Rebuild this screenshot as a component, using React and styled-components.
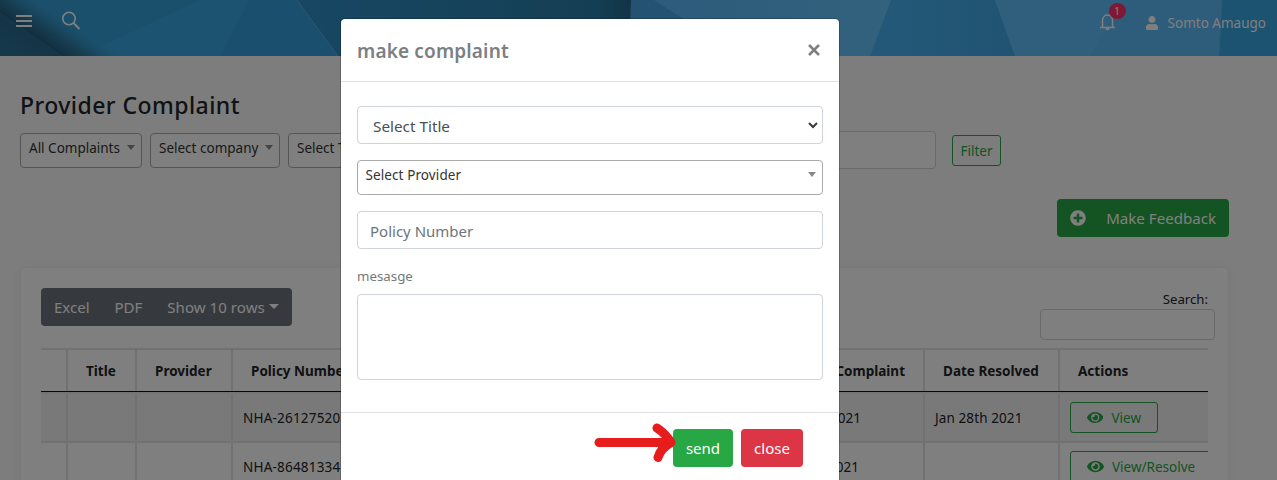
import React from "react";
import styled, { createGlobalStyle } from "styled-components";
import { FaEye, FaPlusCircle, FaUser } from "react-icons/fa";

const Global = createGlobalStyle`
  * { box-sizing: border-box; }
  body { margin: 0; height: 480px; overflow: hidden; background: #fafafa; font-family: "Noto Sans", "Open Sans", sans-serif; font-size: 13.5px; color: #212529; }
  button, input, select, textarea { font: inherit; color: inherit; margin: 0; }
`;

const T = styled.span`
  font-size: ${p => p.$size || 13.5}px;
  letter-spacing: ${p => p.$ls || 0}px;
  line-height: 1;
  white-space: nowrap;
`;

const Page = styled.div`height: 480px; overflow: hidden; position: relative;`;

const Header = styled.header`
  height: 56px; position: relative; display: flex; align-items: center; color: #fff; padding: 0 11px 0 16px; overflow: hidden;
`;
const Wallpaper = styled.svg`position: absolute; inset: 0; width: 1277px; height: 56px;`;
const Menu = styled.div`
  width: 16px; height: 12px; display: flex; flex-direction: column; justify-content: space-between; position: relative; margin-top: -14px;
  i { height: 2px; background: #fff; }
`;
const HeaderIcon = styled.svg`position: relative; fill: none; stroke: #fff;`;
const SearchIcon = styled(HeaderIcon)`width: 19px; height: 19px; margin: -15px 0 0 30px;`;
const HeaderRight = styled.div`margin-left: auto; display: flex; align-items: center; position: relative; margin-top: -9px;`;
const BellWrap = styled.div`position: relative; width: 16px; height: 18px; margin: -4px 30px 0 0;`;
const Badge = styled.span`
  position: absolute; left: 9px; top: -10px; width: 17px; height: 16px; border-radius: 50%; background: #ff3366;
  color: #fff; font-size: 10px; line-height: 16px; text-align: center;
`;
const User = styled.div`display: flex; align-items: center; gap: 9px;
  svg { margin: -2px 0 0 -1px; }
`;

const Content = styled.main`width: 1229px; padding: 35px 0 0 20px;`;
const Title = styled.h1`margin: 0; height: 28px; font-size: 23px; line-height: 28px; font-weight: 500; letter-spacing: 0.45px;`;
const Filters = styled.div`display: flex; align-items: flex-start; gap: 8px; margin-top: 12px; height: 38px;`;
const Select2 = styled.div`
  height: 35px; width: ${p => p.$w || "auto"}; margin: ${p => p.$m || "2px 0 0"}; border: 1px solid #aaa; border-radius: 4px; background: #fff;
  padding: 0 6px 4px ${p => p.$pl || 8}px; display: flex; align-items: center; justify-content: space-between; color: #333;
  flex: none;
`;
const Caret = styled.i`border: solid transparent; border-width: 5px 4px 0; border-top-color: #888; margin-top: -2px;`;
const DateField = styled.input`height: 38px; width: 300px; border: 1px solid #ced4da; border-radius: 4px; background: #fff; margin-left: 140px;`;
const FilterButton = styled.button`
  height: 31px; width: 49px; margin: 4px 0 0 8px; padding: 0; border: 1px solid #28a745; border-radius: 3px; background: transparent; color: #28a745;
`;
const FeedbackRow = styled.div`display: flex; justify-content: flex-end; margin-top: 30px;`;
const FeedbackButton = styled.button`
  width: 172px; height: 38px; border: 0; border-radius: 4px; background: #28a745; color: #fff; padding: 1px 13px 0 13px; display: flex; align-items: center; justify-content: space-between;
  svg { margin-top: -1px; }
`;
const Card = styled.section`
  margin-top: 30px; width: 1209px; height: 300px; padding: 20px; background: #fff; border: 1px solid #f3f3f3; border-radius: 4px; box-shadow: 0 0 10px rgba(0,0,0,.04);
`;
const CardTop = styled.div`display: flex; justify-content: space-between; height: 60px;`;
const ExportGroup = styled.div`
  width: 251px; height: 38px; background: #6c757d; color: #fff; border-radius: 4px; display: flex; align-items: center; padding: 0 13px; gap: 25px;
`;
const RowsMenu = styled.span`display: flex; align-items: center; gap: 4px;`;
const WhiteCaret = styled.i`border: solid transparent; border-width: 5px 5px 0; border-top-color: #fff; margin-top: -1px;`;
const SearchBox = styled.label`display: flex; flex-direction: column; align-items: flex-end; gap: 2px; margin-right: -7px; padding-top: 5px; width: 175px;
  ${T} { margin-right: 7px; height: 14px; }
`;
const SearchInput = styled.input`width: 175px; height: 31px; border: 1px solid #ced4da; border-radius: 4px; background: #fff;`;

const Table = styled.div`width: 1167px; overflow: hidden; border-top: 2px solid #dee2e6;`;
const Row = styled.div`
  display: grid; grid-template-columns: 27px 69px 96px 596px 96px 135px 210px;
  height: ${p => (p.$head ? 42 : p.$striped ? 51 : 49)}px;
  background: ${p => (p.$striped ? "#f2f2f2" : "#fff")};
  border-top: ${p => (p.$striped ? "2px solid #e6e8ea" : "0")};
  border-bottom: ${p => (p.$head ? "1px solid #111" : "0")};
  font-weight: ${p => (p.$head ? 700 : 400)};
`;
const Cell = styled.div`
  display: flex; align-items: center; padding-left: ${p => p.$pl ?? 10}px; padding-right: ${p => p.$pr || 0}px; justify-content: ${p => (p.$end ? "flex-end" : "flex-start")};
  border-right: 2px solid #dee2e6; border-bottom: ${p => (p.$body ? 2 : 0)}px solid #dee2e6; padding-top: ${p => (p.$button ? 0 : p.$body ? 2 : 3)}px; white-space: nowrap;
`;
const ViewButton = styled.button`
  width: ${p => p.$w}px; height: 31px; border: 1px solid #28a745; color: #28a745; background: transparent; border-radius: 3px;
  display: flex; align-items: center; gap: 8px; padding: 0 16px; flex: none;
  ${T} { padding-top: 2px; }
`;

const Backdrop = styled.div`position: absolute; inset: 0; background: rgba(0,0,0,.5);`;
const Modal = styled.div`
  position: absolute; left: 340px; top: 18px; width: 500px; height: 500px; background: #fff; border: 1px solid rgba(0,0,0,.2); background-clip: padding-box; border-radius: 5px;
`;
const ModalHead = styled.div`height: 63px; border-bottom: 1px solid #dee2e6; padding: 2px 19px 0 16px; display: flex; align-items: center; justify-content: space-between; color: #7b8084; font-weight: 600;`;
const CloseIcon = styled.svg`width: 12px; height: 12px; margin-top: -2px; stroke: #7f7f7f; stroke-width: 2.5; fill: none;`;
const ModalBody = styled.div`height: 331px; padding: 24px 16px 0; border-bottom: 1px solid #dee2e6;`;
const Field = styled.div`
  height: 38px; border: 1px solid #ced4da; border-radius: 4px; display: flex; align-items: center; justify-content: space-between; padding: 3px 4px 0 ${p => p.$pl}px; color: ${p => p.$color};
`;
const Chevron = styled.svg`width: 10px; height: 8px; fill: none; stroke: #343a40; stroke-width: 2; margin-top: -3px;`;
const Label = styled.label`display: flex; align-items: center; height: 19px; margin: 18px 0 8px; color: #73787d;`;
const Area = styled.textarea`display: block; width: 466px; height: 86px; resize: none; border: 1px solid #ced4da; border-radius: 4px;`;
const ModalFoot = styled.div`display: flex; justify-content: flex-end; gap: 8px; padding: 16px 36px 0 0;`;
const Action = styled.button`width: ${p => p.$w}px; height: 38px; border: 0; border-radius: 4px; background: ${p => p.$bg}; color: #fff; padding: 1px 0 0;`;
const Arrow = styled.svg`position: absolute; left: 593px; top: 422px; width: 86px; height: 42px; fill: none; stroke: #e71d1d; stroke-width: 9; stroke-linecap: round; stroke-linejoin: round;`;

export default function App() {
  return (
    <Page>
      <Global />
      <Header>
        <Wallpaper viewBox="0 0 1277 56" preserveAspectRatio="none">
          <defs>
            <linearGradient id="fold" x1="12" y1="48" x2="32" y2="20" gradientUnits="userSpaceOnUse">
              <stop offset="0" stopColor="#2c7096" /><stop offset="1" stopColor="#25648a" />
            </linearGradient>
            <linearGradient id="shade" x1="30" y1="34" x2="50" y2="5" gradientUnits="userSpaceOnUse">
              <stop offset="0" stopColor="#245c7c" /><stop offset=".45" stopColor="#307fa9" /><stop offset="1" stopColor="#36a0d8" stopOpacity="0" />
            </linearGradient>
            <linearGradient id="navy"><stop offset="0" stopColor="#308ec8" /><stop offset=".55" stopColor="#2c86b6" /><stop offset=".9" stopColor="#297da6" /><stop offset="1" stopColor="#236a8c" /></linearGradient>
            <linearGradient id="steel"><stop offset="0" stopColor="#58b6f8" /><stop offset="1" stopColor="#66c4fc" /></linearGradient>
            <linearGradient id="facet"><stop offset="0" stopColor="#4ab2f2" /><stop offset="1" stopColor="#40a8e4" /></linearGradient>
          </defs>
          <rect width="250" height="56" fill="#36a0d8" />
          <path d="M80 56L200 0H250L220 56Z" fill="#38a6e0" />
          <path d="M250 0H297L338 56H220Z" fill="#34a0dc" />
          <path d="M0 13L62 56H150L70 0H0Z" fill="url(#shade)" />
          <path d="M0 13L62 56H0Z" fill="url(#fold)" />
          <path d="M297 0H631V56H338Z" fill="url(#navy)" />
          <path d="M631 0H1222L1219 56H630Z" fill="#5cb8fa" />
          <rect x="631" width="260" height="56" fill="url(#steel)" />
          <path d="M631 0H654L740 56H630Z" fill="#46a4e4" />
          <path d="M891 0H995L1015 56H870Z" fill="url(#facet)" />
          <path d="M995 0H1222L1219 56H1015Z" fill="#60befa" />
          <path d="M1090 56L1122 0H1222L1219 56Z" fill="#5cb8f6" />
          <path d="M1222 0H1277V56H1219Z" fill="#38a6e0" />
        </Wallpaper>
        <Menu><i /><i /><i /></Menu>
        <SearchIcon viewBox="0 0 19 19" strokeWidth="1.6"><circle cx="7" cy="7.5" r="6.2" /><path d="M11.500 12l6 6" strokeWidth="2" /></SearchIcon>
        <HeaderRight>
          <BellWrap>
            <HeaderIcon width="16" height="18" viewBox="0 0 16 18" strokeWidth="1.5"><path d="M0 14.500h15M2.500 14V7.500c0-3 2-5.500 5-5.500s5 2.500 5 5.500V14M6 15.500c1 1.500 2 1.500 3 0" /></HeaderIcon>
            <Badge>1</Badge>
          </BellWrap>
          <User><FaUser size="14" /><T>Somto Amaugo</T></User>
        </HeaderRight>
      </Header>
      <Content>
        <Title>Provider Complaint</Title>
        <Filters>
          <Select2 $w="122px"><T>All Complaints</T><Caret /></Select2>
          <Select2 $w="130px"><T>Select company</T><Caret /></Select2>
          <Select2 $w="200px"><T>Select Title</T><Caret /></Select2>
          <DateField />
          <FilterButton><T $size={13.5}>Filter</T></FilterButton>
        </Filters>
        <FeedbackRow><FeedbackButton><FaPlusCircle size="16" /><T $size={15.1}>Make Feedback</T></FeedbackButton></FeedbackRow>
        <Card>
          <CardTop>
            <ExportGroup><T $size={15}>Excel</T><T $size={15}>PDF</T><RowsMenu><T $size={15} $ls={0.06}>Show 10 rows</T><WhiteCaret /></RowsMenu></ExportGroup>
            <SearchBox><T $size={13.2}>Search:</T><SearchInput /></SearchBox>
          </CardTop>
          <Table>
            <Row $head><Cell /><Cell $pl={18}><T>Title</T></Cell><Cell $pl={18}><T>Provider</T></Cell><Cell $pl={18}><T>Policy Number</T></Cell><Cell $end $pr={18}><T>Date of Complaint</T></Cell><Cell $pl={18}><T>Date Resolved</T></Cell><Cell $pl={18}><T>Actions</T></Cell></Row>
            <Row $striped><Cell $body /><Cell $body /><Cell $body /><Cell $body><T $ls={0.2}>NHA-26127520</T></Cell><Cell $body $end $pr={62}><T>Jan 28th 2021</T></Cell><Cell $body><T $ls={0.1}>Jan 28th 2021</T></Cell><Cell $body $button><ViewButton $w={88}><FaEye size="17" /><T>View</T></ViewButton></Cell></Row>
            <Row><Cell $body /><Cell $body /><Cell $body /><Cell $body><T $ls={0.2}>NHA-86481334</T></Cell><Cell $body $end $pr={64}><T>Jan 28th 2021</T></Cell><Cell $body /><Cell $body $button><ViewButton $w={143}><FaEye size="17" /><T>View/Resolve</T></ViewButton></Cell></Row>
          </Table>
        </Card>
      </Content>
      <Backdrop />
      <Modal>
        <ModalHead><T $size={19} $ls={0.15}>make complaint</T><CloseIcon viewBox="0 0 12 12"><path d="M1 1l10 10M11 1L1 11" /></CloseIcon></ModalHead>
        <ModalBody>
          <Field $pl={15} $color="#495057"><T $size={15.3}>Select Title</T><Chevron viewBox="0 0 10 8"><path d="M1 2l4 4 4-4" /></Chevron></Field>
          <Select2 $m="16px 0" $pl={7.5}><T $ls={0.1}>Select Provider</T><Caret /></Select2>
          <Field $pl={12} $color="#6c757d"><T $size={15}>Policy Number</T></Field>
          <Label><T $size={13.3}>mesasge</T></Label>
          <Area />
        </ModalBody>
        <ModalFoot><Action $w={60} $bg="#28a745"><T $size={15}>send</T></Action><Action $w={62} $bg="#dc3545"><T $size={15}>close</T></Action></ModalFoot>
      </Modal>
      <Arrow viewBox="0 0 86 42"><path d="M6 20.500H78M64 6C70 10 74 14 78 20.500C72 24 67 28 65 35.500" /></Arrow>
    </Page>
  );
}
